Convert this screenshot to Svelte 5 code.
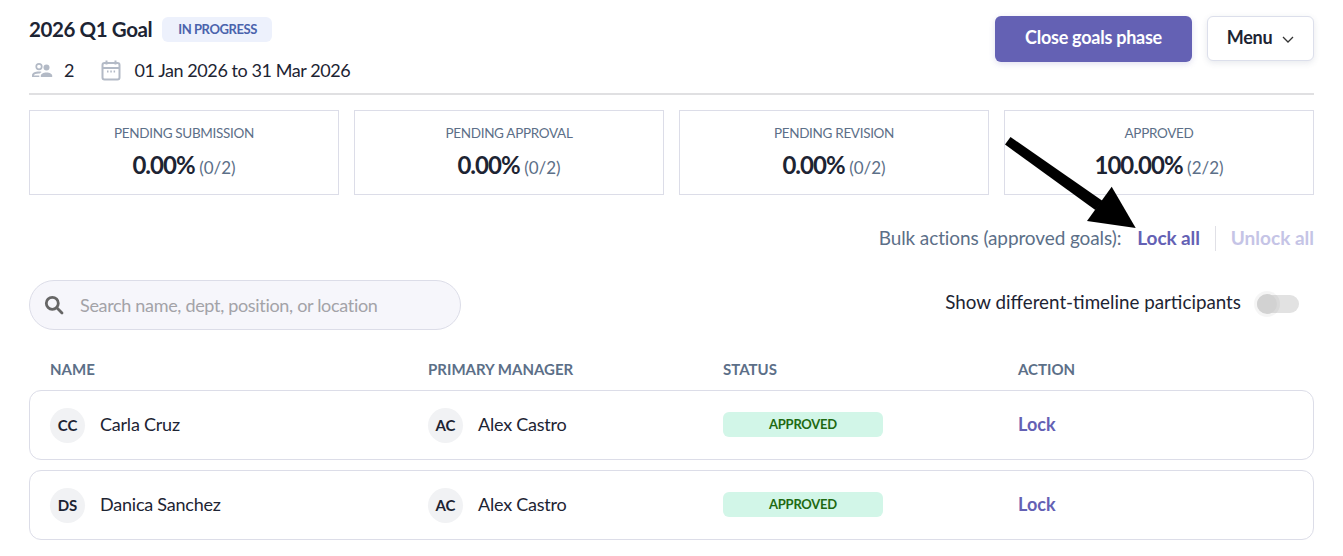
<script>
    const stats = [
        { label: "PENDING SUBMISSION", pct: "0.00%", count: "(0/2)" },
        { label: "PENDING APPROVAL", pct: "0.00%", count: "(0/2)" },
        { label: "PENDING REVISION", pct: "0.00%", count: "(0/2)" },
        { label: "APPROVED", pct: "100.00%", count: "(2/2)" },
    ];
    const rows = [
        { initials: "CC", name: "Carla Cruz" },
        { initials: "DS", name: "Danica Sanchez" },
    ];
</script>

<div class="page">
    <header class="top">
        <div>
            <div class="title-row">
                <h1>2026 Q1 Goal</h1>
                <span class="tag">IN PROGRESS</span>
            </div>
            <div class="meta">
                <svg class="people" width="22" height="16" viewBox="0 0 22 16" fill="#b3bac6">
                    <path d="M8 1a3.6 3.6 0 1 1 0 7.2A3.6 3.6 0 0 1 8 1zm0 1.7a1.9 1.9 0 1 0 0 3.8 1.9 1.9 0 0 0 0-3.8z" />
                    <path d="M1 15v-1.6C1 11 4 9.600 8 9.600c1 0 1.900.1 2.700.3-.9.5-1.500 1.100-1.800 1.600H8c-2.900 0-5.200.8-5.200 1.900h5.500V15z" />
                    <circle cx="15.500" cy="5.600" r="3" />
                    <path d="M9.800 15v-1.300c0-2 2.500-3.300 5.700-3.300s5.700 1.300 5.700 3.300V15z" />
                </svg>
                <span class="count">2</span>
                <svg class="cal" width="20" height="21" viewBox="0 0 20 21" fill="none" stroke="#b3bac6" stroke-width="2">
                    <rect x="1.500" y="3" width="17" height="16.500" rx="2" />
                    <path d="M1.500 8h17M5.500 0.500v4M14.500 0.500v4" />
                    <path d="M6 11.500h1.500M9.300 11.500h1.500M12.600 11.500h1.500" />
                </svg>
                <span class="dates">01 Jan 2026 to 31 Mar 2026</span>
            </div>
        </div>
        <div class="top-actions">
            <button class="primary">Close goals phase</button>
            <button class="menu">
                Menu
                <svg width="12" height="7" viewBox="0 0 12 7" fill="none" stroke="#333" stroke-width="1.300">
                    <path d="M1 1l5 5 5-5" />
                </svg>
            </button>
        </div>
    </header>

    <section class="stats">
        {#each stats as s}
            <div class="stat">
                <div class="stat-label">{s.label}</div>
                <div class="stat-value"><b>{s.pct}</b> <span>{s.count}</span></div>
            </div>
        {/each}
    </section>

    <div class="bulk">
        <span class="bulk-label">Bulk actions (approved goals):</span>
        <a href="#lock" class="lock-all">Lock all</a>
        <span class="sep"></span>
        <a href="#unlock" class="unlock-all">Unlock all</a>
    </div>

    <div class="filters">
        <label class="search">
            <svg width="20" height="20" viewBox="0 0 20 20" fill="none" stroke="#666" stroke-width="2.800">
                <circle cx="8.300" cy="8.300" r="6" />
                <path d="M12.800 12.800l5.200 5.200" stroke-linecap="round" />
            </svg>
            <input placeholder="Search name, dept, position, or location" />
        </label>
        <div class="toggle-wrap">
            <span class="toggle-label">Show different-timeline participants</span>
            <span class="toggle"><span class="knob"></span></span>
        </div>
    </div>

    <div class="thead">
        <span>NAME</span>
        <span>PRIMARY MANAGER</span>
        <span>STATUS</span>
        <span>ACTION</span>
    </div>

    {#each rows as r}
        <div class="row">
            <div class="person">
                <span class="avatar">{r.initials}</span>
                <span class="who">{r.name}</span>
            </div>
            <div class="person">
                <span class="avatar">AC</span>
                <span class="who">Alex Castro</span>
            </div>
            <div><span class="status">APPROVED</span></div>
            <div><a href="#lock" class="lock">Lock</a></div>
        </div>
    {/each}

    <svg class="arrow" width="140" height="100" viewBox="0 0 140 100">
        <path d="M7.500 2L99.700 66 92.300 75 2 9.500z" fill="#000" />
        <path d="M132.700 93L108.700 51.700 84 86z" fill="#000" />
    </svg>
</div>

<style>
    :global(body) {
        margin: 0;
        background: #fff;
    }

    .page {
        position: relative;
        height: 556px;
        overflow: hidden;
        box-sizing: border-box;
        padding: 0 29px;
        font-family: Lato, "Liberation Sans", sans-serif;
        color: #1d2433;
        font-size: 18px;
    }

    .top {
        display: flex;
        justify-content: space-between;
        height: 93px;
        border-bottom: 2px solid #e0e0e2;
        box-sizing: content-box;
    }

    .title-row {
        display: flex;
        align-items: center;
        gap: 10px;
        padding-top: 16px;
    }

    h1 {
        margin: 0;
        font-size: 20.500px;
        font-weight: 700;
        line-height: 26px;
        letter-spacing: -0.4px;
    }

    .tag {
        background: #edf1fc;
        color: #4a63ac;
        font-size: 13px;
        font-weight: 700;
        line-height: 25px;
        padding: 0 15px 0 16px;
        border-radius: 6px;
        letter-spacing: -0.42px;
    }

    .meta {
        display: flex;
        align-items: center;
        margin-top: 16px;
        height: 24px;
    }

    .people {
        margin-left: 2px;
    }

    .count {
        margin-left: 11px;
        margin-right: 27px;
    }

    .cal {
        margin-right: 13px;
    }

    .dates {
        letter-spacing: -0.42px;
    }

    .top-actions {
        display: flex;
        align-items: flex-start;
        gap: 15px;
        padding-top: 16px;
    }

    button {
        font-family: inherit;
        font-size: 18px;
        font-weight: 700;
        border-radius: 6px;
        cursor: pointer;
        letter-spacing: -0.25px;
        padding: 0 0 4px;
    }

    .primary {
        width: 197px;
        height: 46px;
        background: #6461b4;
        color: #fff;
        border: none;
        box-shadow: 0 2px 6px rgba(100, 97, 180, 0.2);
    }

    .menu {
        display: flex;
        align-items: center;
        justify-content: center;
        gap: 10px;
        width: 107px;
        height: 45px;
        background: #fff;
        color: #1d2433;
        border: 1px solid #dcdfeb;
        box-shadow: 0 2px 6px rgba(60, 70, 110, 0.12);
    }

    .menu svg {
        margin-top: 6px;
    }

    .stats {
        display: grid;
        grid-template-columns: repeat(4, 1fr);
        gap: 15px;
        margin-top: 15px;
    }

    .stat {
        height: 85px;
        box-sizing: border-box;
        border: 1px solid #dcdde8;
        text-align: center;
        padding-top: 13px;
    }

    .stat-label {
        font-size: 13.500px;
        line-height: 18px;
        color: #5c6f88;
        letter-spacing: -0.32px;
    }

    .stat-value {
        margin-top: 8px;
        line-height: 30px;
        color: #5c6f88;
        font-size: 17px;
    }

    .stat-value b {
        font-size: 24px;
        color: #1d2433;
        letter-spacing: -0.95px;
    }

    .bulk {
        display: flex;
        align-items: center;
        justify-content: flex-end;
        height: 24px;
        margin-top: 30px;
        padding-bottom: 2px;
        font-size: 19px;
    }

    .bulk-label {
        color: #5c6f88;
        letter-spacing: -0.1px;
    }

    a {
        text-decoration: none;
        font-weight: 700;
    }

    .lock-all {
        color: #6461b4;
        margin-left: 16px;
        letter-spacing: -0.1px;
    }

    .sep {
        width: 1px;
        height: 25px;
        background: #e0e0e6;
        margin: 2px 15px 0;
    }

    .unlock-all {
        color: #c5c4e6;
    }

    .filters {
        display: flex;
        justify-content: space-between;
        margin-top: 29px;
    }

    .search {
        display: flex;
        align-items: center;
        gap: 16px;
        width: 432px;
        height: 50px;
        box-sizing: border-box;
        padding: 0 14px;
        background: #f6f6fb;
        border: 1px solid #dcdde8;
        border-radius: 25px;
    }

    input {
        flex: 1;
        min-width: 0;
        border: none;
        outline: none;
        background: transparent;
        font-family: inherit;
        font-size: 18px;
        letter-spacing: -0.32px;
        padding: 0;
    }

    input::placeholder {
        color: #a3a3a8;
        opacity: 1;
    }

    .toggle-wrap {
        display: flex;
        align-items: center;
        gap: 16px;
        height: 44px;
        font-size: 18.800px;
    }

    .toggle-label {
        padding-bottom: 2px;
    }

    .toggle {
        position: relative;
        display: block;
        width: 42px;
        height: 18px;
        margin: 4px 15px 0 0;
        background: #e2e2e2;
        border-radius: 9px;
    }

    .knob {
        position: absolute;
        left: 0;
        top: -1px;
        width: 20px;
        height: 20px;
        border-radius: 50%;
        background: #d2d2d2;
        box-shadow: 0 0 0 3px rgba(0, 0, 0, 0.04);
    }

    .thead,
    .row {
        display: grid;
        grid-template-columns: 378px 295px 295px 1fr;
        align-items: center;
        padding: 0 20px;
    }

    .thead {
        margin-top: 26px;
        height: 26px;
        padding: 0 21px;
        font-size: 15px;
        font-weight: 700;
        color: #5c6f88;
    }

    .thead + .row {
        margin-top: 8px;
    }

    .row {
        height: 70px;
        box-sizing: border-box;
        border: 1px solid #dcdde8;
        border-radius: 12px;
        margin-bottom: 10px;
    }

    .person {
        display: flex;
        align-items: center;
        gap: 15px;
    }

    .who {
        letter-spacing: -0.22px;
        padding-bottom: 2px;
    }

    .avatar {
        display: flex;
        align-items: center;
        justify-content: center;
        width: 35px;
        height: 35px;
        border-radius: 50%;
        background: #f1f2f4;
        font-size: 15px;
        font-weight: 700;
    }

    .status {
        display: block;
        width: 160px;
        height: 25px;
        line-height: 25px;
        margin-bottom: 2px;
        border-radius: 6px;
        background: #d2f6e8;
        color: #1f6a12;
        text-align: center;
        font-size: 13px;
        font-weight: 700;
        letter-spacing: -0.25px;
    }

    .lock {
        color: #6461b4;
        display: block;
        padding-bottom: 2px;
    }

    .arrow {
        position: absolute;
        left: 1003px;
        top: 135px;
    }
</style>
